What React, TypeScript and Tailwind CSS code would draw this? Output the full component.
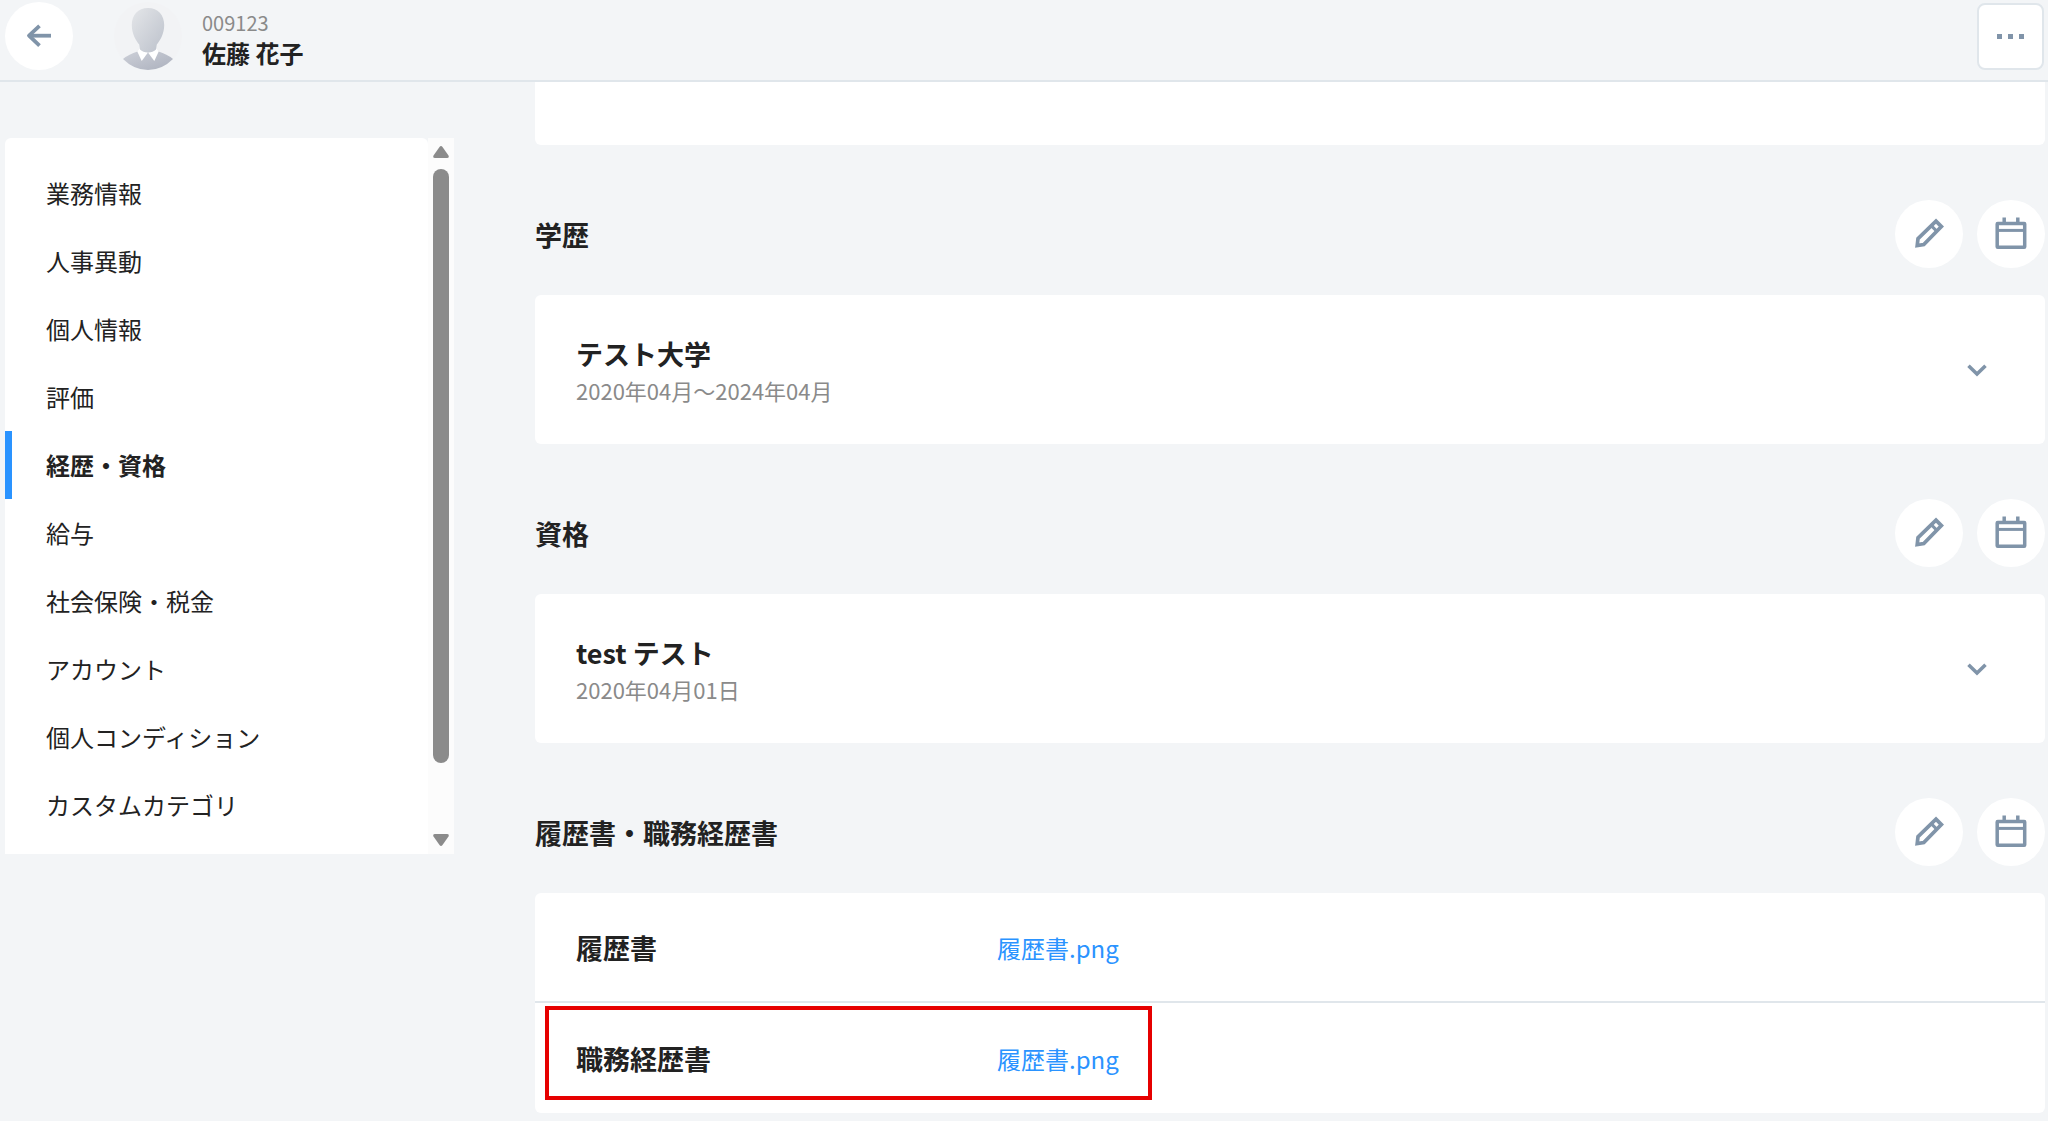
import { useState } from "react"

const categories = [
  "業務情報",
  "人事異動",
  "個人情報",
  "評価",
  "経歴・資格",
  "給与",
  "社会保険・税金",
  "アカウント",
  "個人コンディション",
  "カスタムカテゴリ",
]

const documents = [
  { label: "履歴書", file: "履歴書.png", highlighted: false },
  { label: "職務経歴書", file: "履歴書.png", highlighted: true },
]

function BackIcon() {
  return (
    <svg viewBox="0 0 68 68" className="size-17" fill="none" stroke="#8094a9" strokeWidth="3.8" aria-hidden="true">
      <path d="M24 33.700H46" />
      <path d="M34.500 23.800L24 33.700L34.500 43.600" strokeLinejoin="round" />
    </svg>
  )
}

function PencilIcon() {
  return (
    <svg viewBox="0 0 68 68" className="size-17" fill="none" stroke="#8094a9" strokeWidth="3.7" aria-hidden="true">
      <path d="M22.200 45.600L23 38.600L41 21.200L46.400 26.600L28.800 44.600Z" />
      <path d="M36.200 25.600L42.200 31.600" strokeWidth="3" />
    </svg>
  )
}

function CalendarIcon() {
  return (
    <svg viewBox="0 0 68 68" className="size-17" fill="none" stroke="#8094a9" strokeWidth="3.5" aria-hidden="true">
      <rect x="20.200" y="23.500" width="27.500" height="23.700" rx="0.5" />
      <path d="M20 30.400H48" strokeWidth="3" />
      <path d="M27.200 17.500V23M40.800 17.500V23" />
    </svg>
  )
}

function Avatar() {
  return (
    <svg viewBox="0 0 68 68" className="size-17 shrink-0" role="img" aria-label="佐藤 花子">
      <defs>
        <linearGradient id="face" x1="0" y1="0" x2="1" y2="1">
          <stop offset="0" stopColor="#e4e6e9" />
          <stop offset="1" stopColor="#bcc1cb" />
        </linearGradient>
        <linearGradient id="suit" x1="0" y1="0" x2="1" y2="1">
          <stop offset="0" stopColor="#cdd0d8" />
          <stop offset="1" stopColor="#abb0bd" />
        </linearGradient>
      </defs>
      <circle cx="34" cy="34" r="34" fill="#f2f3f5" />
      <path d="M9 57Q15 52 23.500 49.500H44.500Q53 52 59 57Q48 68 34 68T9 57Z" fill="url(#suit)" />
      <path d="M23.300 49.500L26 46.500L34 50.500L27.700 59Z" fill="#fff" />
      <path d="M44.700 49.500L42 46.500L34 50.500L40.300 59Z" fill="#fff" />
      <path
        d="M34 6C44 6 50.200 13 50.200 23C50.200 32 46 38.500 42.800 42.500L42 47.500Q39 50.500 34 50.500T26 47.500L25.200 42.500C22 38.500 17.800 32 17.800 23C17.800 13 24 6 34 6Z"
        fill="url(#face)"
      />
    </svg>
  )
}

function Section({ title, children }: { title: string; children: React.ReactNode }) {
  return (
    <section className="mt-[55px]">
      <div className="mb-[27px] flex items-center justify-between">
        <h2 className="pt-[2px] text-[27px] font-bold">{title}</h2>
        <div className="flex gap-[14px]">
          <button type="button" aria-label={`${title}を編集`} className="rounded-full bg-white">
            <PencilIcon />
          </button>
          <button type="button" aria-label={`${title}の履歴`} className="rounded-full bg-white">
            <CalendarIcon />
          </button>
        </div>
      </div>
      {children}
    </section>
  )
}

function RecordCard({ name, period }: { name: string; period: string }) {
  const [open, setOpen] = useState(false)

  return (
    <button
      type="button"
      aria-expanded={open}
      onClick={() => setOpen(!open)}
      className="flex w-full items-center justify-between rounded-md bg-white py-[37px] pr-14 pl-[41px] text-left"
    >
      <span className="flex flex-col pt-[2px]">
        <span className="text-[27px] leading-10 font-bold">{name}</span>
        <span className="text-[22px] leading-[33px] text-[#8a8a8a]">{period}</span>
      </span>
      <svg viewBox="0 0 24 24" className="size-6" fill="none" stroke="#8094a9" strokeWidth="3.6" aria-hidden="true">
        <path d="M3.500 7.800L12 16L20.500 7.800" />
      </svg>
    </button>
  )
}

export default function App() {
  const [active, setActive] = useState("経歴・資格")

  return (
    <div className="min-h-screen bg-[#f3f5f7] pb-2 font-['Noto_Sans_CJK_JP',sans-serif] text-[#222]">
      {/* Header */}
      <header className="flex items-center border-b-2 border-[#e0e6eb] pt-[2px] pr-1 pb-[10px] pl-[5px]">
        <button type="button" aria-label="戻る" className="mr-[41px] rounded-full bg-white">
          <BackIcon />
        </button>
        <Avatar />
        <div className="ml-5 flex flex-col pt-[6px]">
          <span className="text-[20px] leading-7 text-[#8a8a8a]">009123</span>
          <h1 className="text-2xl leading-8 font-bold">佐藤 花子</h1>
        </div>
        <button
          type="button"
          aria-label="メニュー"
          className="ml-auto flex size-[67px] items-center justify-center gap-[6px] rounded-lg border-2 border-[#e0e6eb] bg-white"
        >
          <span className="size-[5px] bg-[#8094a9]" />
          <span className="size-[5px] bg-[#8094a9]" />
          <span className="size-[5px] bg-[#8094a9]" />
        </button>
      </header>

      <div className="flex items-start gap-[81px] pr-[3px] pl-[5px]">
        {/* Category menu */}
        <aside className="mt-14 flex w-[449px] shrink-0">
          <nav className="grow rounded-t-md bg-white pt-[21px] pb-[15px]">
            <ul>
              {categories.map((category) => (
                <li key={category}>
                  <button
                    type="button"
                    onClick={() => setActive(category)}
                    className={`flex h-17 w-full items-center border-l-[7px] pl-[34px] text-2xl ${
                      active === category ? "border-[#2a93ff] font-bold" : "border-transparent"
                    }`}
                  >
                    {category}
                  </button>
                </li>
              ))}
            </ul>
          </nav>
          {/* Scroll bar */}
          <div className="flex w-[26px] flex-col items-center bg-[#fcfcfc] py-2" aria-hidden="true">
            <svg viewBox="0 0 16 12" className="h-3 w-4" fill="#8b8b8b">
              <path d="M6.500 1Q8-1 9.500 1L15.500 9.500Q16.500 12 14 12H2Q-0.500 12 0.500 9.500Z" />
            </svg>
            <div className="mt-[11px] w-4 grow rounded-full bg-[#8b8b8b]" />
            <svg viewBox="0 0 16 12" className="mt-[71px] h-3 w-4" fill="#8b8b8b">
              <path d="M6.500 11Q8 13 9.500 11L15.500 2.500Q16.500 0 14 0H2Q-0.500 0 0.500 2.500Z" />
            </svg>
          </div>
        </aside>

        <main className="min-w-0 grow">
          <div className="h-[63px] rounded-b-md bg-white" />

          <Section title="学歴">
            <RecordCard name="テスト大学" period="2020年04月～2024年04月" />
          </Section>

          <Section title="資格">
            <RecordCard name="test テスト" period="2020年04月01日" />
          </Section>

          <Section title="履歴書・職務経歴書">
            <dl className="divide-y-2 divide-[#e0e6eb] rounded-md bg-white">
              {documents.map((doc) => (
                <div key={doc.label} className="relative flex h-[110px] items-center pt-[2px] pl-[41px]">
                  <dt className="w-[421px] text-[27px] font-bold">{doc.label}</dt>
                  <dd className="text-2xl">
                    <a href="#" className="text-[#2a93ff]">
                      {doc.file}
                    </a>
                  </dd>
                  {doc.highlighted && (
                    <span className="pointer-events-none absolute top-[3px] left-[10px] h-[94px] w-[607px] border-4 border-[#e60000]" />
                  )}
                </div>
              ))}
            </dl>
          </Section>
        </main>
      </div>
    </div>
  )
}
